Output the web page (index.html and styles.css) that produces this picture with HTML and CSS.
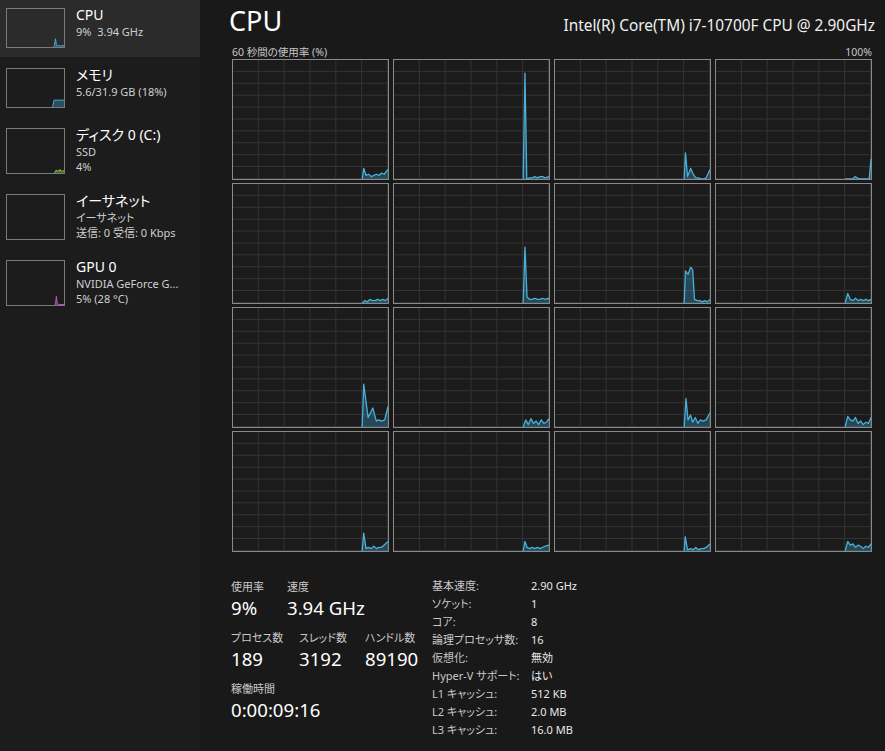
FILE: index.html
```html
<!DOCTYPE html>
<html lang="ja">
<head>
<meta charset="utf-8">
<title>タスク マネージャー - CPU</title>
<link rel="stylesheet" href="styles.css">
</head>
<body>
<div class="app">
  <aside class="sidebar">
    <div class="item selected">
      <div class="thumb"><svg viewBox="0 0 60 100" preserveAspectRatio="none"><polygon class="f-cpu" points="49,100 50,96 51,78 52,95 53,97 54,96 55,97 56,98 57,97 58,96 60,97 60,100"/><polyline class="l-cpu" points="49,100 50,96 51,78 52,95 53,97 54,96 55,97 56,98 57,97 58,96 60,97"/></svg></div>
      <div class="info"><div class="name">CPU</div><div class="sub">9%&nbsp;&nbsp;3.94 GHz</div></div>
    </div>
    <div class="item">
      <div class="thumb"><svg viewBox="0 0 60 100" preserveAspectRatio="none"><polygon class="f-mem" points="48,100 49.5,82 60,82 60,100"/><polyline class="l-mem" points="48,100 49.5,82 60,82"/></svg></div>
      <div class="info"><div class="name">メモリ</div><div class="sub">5.6/31.9 GB (18%)</div></div>
    </div>
    <div class="item">
      <div class="thumb tall"><svg viewBox="0 0 60 100" preserveAspectRatio="none"><polygon class="f-disk" points="50,100 51,96 52,93 53,97 54,94 55,96 56,92 57,97 58,95 59,96 60,94 60,100"/><polyline class="l-disk" points="50,100 51,96 52,93 53,97 54,94 55,96 56,92 57,97 58,95 59,96 60,94"/></svg></div>
      <div class="info"><div class="name">ディスク 0 (C:)</div><div class="sub">SSD</div><div class="sub">4%</div></div>
    </div>
    <div class="item">
      <div class="thumb tall"></div>
      <div class="info"><div class="name">イーサネット</div><div class="sub">イーサネット</div><div class="sub">送信: 0 受信: 0 Kbps</div></div>
    </div>
    <div class="item">
      <div class="thumb tall"><svg viewBox="0 0 60 100" preserveAspectRatio="none"><polygon class="f-gpu" points="50,100 51,99 52,80 53,99 54,98 55,99 60,99 60,100"/><polyline class="l-gpu" points="50,100 51,99 52,80 53,99 54,98 55,99 60,99"/></svg></div>
      <div class="info"><div class="name">GPU 0</div><div class="sub">NVIDIA GeForce G...</div><div class="sub">5% (28 °C)</div></div>
    </div>
  </aside>

  <main class="main">
    <header class="head">
      <h1 class="title">CPU</h1>
      <div class="model">Intel(R) Core(TM) i7-10700F CPU @ 2.90GHz</div>
    </header>
    <div class="axis"><span>60 秒間の使用率 (%)</span><span>100%</span></div>

    <div class="graphs">
      <div class="cell"><svg viewBox="0 0 60 100" preserveAspectRatio="none"><polygon class="fill" points="50,100 50.6,91 51.5,97 52.5,96 53.5,98 54.5,97 55.5,96 56.5,97 57.5,95 58.5,96 60,92 60,100"/><polyline class="line" points="50,100 50.6,91 51.5,97 52.5,96 53.5,98 54.5,97 55.5,96 56.5,97 57.5,95 58.5,96 60,92"/></svg></div>
      <div class="cell"><svg viewBox="0 0 60 100" preserveAspectRatio="none"><polygon class="fill" points="50,100 50.7,11 51.4,100 52.5,99 53.5,99 54.5,98 55.5,99 56.5,98 57.5,98 58.5,99 60,98 60,100"/><polyline class="line" points="50,100 50.7,11 51.4,100 52.5,99 53.5,99 54.5,98 55.5,99 56.5,98 57.5,98 58.5,99 60,98"/></svg></div>
      <div class="cell"><svg viewBox="0 0 60 100" preserveAspectRatio="none"><polygon class="fill" points="50,100 50.5,78 51.3,98 52.5,91 53.5,96 54.5,99 55.5,99 56.5,100 57.5,100 58.5,99 60,92 60,100"/><polyline class="line" points="50,100 50.5,78 51.3,98 52.5,91 53.5,96 54.5,99 55.5,99 56.5,100 57.5,100 58.5,99 60,92"/></svg></div>
      <div class="cell"><svg viewBox="0 0 60 100" preserveAspectRatio="none"><polygon class="fill" points="50,100 53,100 53.8,98 54.6,99 55.5,100 59.3,100 60,83 60,100"/><polyline class="line" points="50,100 53,100 53.8,98 54.6,99 55.5,100 59.3,100 60,83"/></svg></div>

      <div class="cell"><svg viewBox="0 0 60 100" preserveAspectRatio="none"><polygon class="fill" points="50,100 51,98 52,99 53,97 54,98 55,98 56,97 57,98 58,97 59,98 60,96 60,100"/><polyline class="line" points="50,100 51,98 52,99 53,97 54,98 55,98 56,97 57,98 58,97 59,98 60,96"/></svg></div>
      <div class="cell"><svg viewBox="0 0 60 100" preserveAspectRatio="none"><polygon class="fill" points="50,100 50.7,53 51.5,95 52.5,97 53.5,97 54.5,96 55.5,97 56.5,97 57.5,96 58.5,97 60,96 60,100"/><polyline class="line" points="50,100 50.7,53 51.5,95 52.5,97 53.5,97 54.5,96 55.5,97 56.5,97 57.5,96 58.5,97 60,96"/></svg></div>
      <div class="cell"><svg viewBox="0 0 60 100" preserveAspectRatio="none"><polygon class="fill" points="50,100 50.5,73 51.5,76 52.5,70 53.3,72 54,97 55,98 56,98 57,99 58,98 59,99 60,97 60,100"/><polyline class="line" points="50,100 50.5,73 51.5,76 52.5,70 53.3,72 54,97 55,98 56,98 57,99 58,98 59,99 60,97"/></svg></div>
      <div class="cell"><svg viewBox="0 0 60 100" preserveAspectRatio="none"><polygon class="fill" points="50,100 51,92 52,97 53,98 54,96 55,98 56,97 57,98 58,97 59,98 60,97 60,100"/><polyline class="line" points="50,100 51,92 52,97 53,98 54,96 55,98 56,97 57,98 58,97 59,98 60,97"/></svg></div>

      <div class="cell"><svg viewBox="0 0 60 100" preserveAspectRatio="none"><polygon class="fill" points="50,100 50.6,64 52.3,92 54.1,84 55.5,95 56.5,94 57.5,95 58.7,94 60,83 60,100"/><polyline class="line" points="50,100 50.6,64 52.3,92 54.1,84 55.5,95 56.5,94 57.5,95 58.7,94 60,83"/></svg></div>
      <div class="cell"><svg viewBox="0 0 60 100" preserveAspectRatio="none"><polygon class="fill" points="50,100 51,94 52,98 53,93 54,97 55,95 56,98 57,94 58,97 59,96 60,93 60,100"/><polyline class="line" points="50,100 51,94 52,98 53,93 54,97 55,95 56,98 57,94 58,97 59,96 60,93"/></svg></div>
      <div class="cell"><svg viewBox="0 0 60 100" preserveAspectRatio="none"><polygon class="fill" points="50,100 50.7,76 51.5,94 52.5,90 53.3,96 54.3,92 55.3,97 56.3,94 57.3,95 58.5,94 60,88 60,100"/><polyline class="line" points="50,100 50.7,76 51.5,94 52.5,90 53.3,96 54.3,92 55.3,97 56.3,94 57.3,95 58.5,94 60,88"/></svg></div>
      <div class="cell"><svg viewBox="0 0 60 100" preserveAspectRatio="none"><polygon class="fill" points="50,100 51,91 52,94 53,95 54,92 55,97 56,95 57,98 58,96 59,97 60,92 60,100"/><polyline class="line" points="50,100 51,91 52,94 53,95 54,92 55,97 56,95 57,98 58,96 59,97 60,92"/></svg></div>

      <div class="cell"><svg viewBox="0 0 60 100" preserveAspectRatio="none"><polygon class="fill" points="50,100 50.6,85 51.5,98 52.5,97 53.5,98 54.5,96 55.5,98 56.5,97 57.5,97 58.5,95 60,92 60,100"/><polyline class="line" points="50,100 50.6,85 51.5,98 52.5,97 53.5,98 54.5,96 55.5,98 56.5,97 57.5,97 58.5,95 60,92"/></svg></div>
      <div class="cell"><svg viewBox="0 0 60 100" preserveAspectRatio="none"><polygon class="fill" points="50,100 50.7,92 51.5,97 52.5,98 53.5,97 54.5,98 55.5,97 56.5,98 57.5,97 58.5,96 60,95 60,100"/><polyline class="line" points="50,100 50.7,92 51.5,97 52.5,98 53.5,97 54.5,98 55.5,97 56.5,98 57.5,97 58.5,96 60,95"/></svg></div>
      <div class="cell"><svg viewBox="0 0 60 100" preserveAspectRatio="none"><polygon class="fill" points="50,100 50.4,88 51.3,99 52.5,98 53.5,99 54.5,97 55.5,99 56.5,98 57.5,98 58.5,97 60,94 60,100"/><polyline class="line" points="50,100 50.4,88 51.3,99 52.5,98 53.5,99 54.5,97 55.5,99 56.5,98 57.5,98 58.5,97 60,94"/></svg></div>
      <div class="cell"><svg viewBox="0 0 60 100" preserveAspectRatio="none"><polygon class="fill" points="50,100 51,92 52,95 53,94 54,97 55,95 56,96 57,98 58,96 59,97 60,94 60,100"/><polyline class="line" points="50,100 51,92 52,95 53,94 54,97 55,95 56,96 57,98 58,96 59,97 60,94"/></svg></div>
    </div>

    <section class="stats">
      <div class="stats-left">
        <div class="stat-row">
          <div class="stat w56"><div class="lbl">使用率</div><div class="val">9%</div></div>
          <div class="stat"><div class="lbl">速度</div><div class="val">3.94 GHz</div></div>
        </div>
        <div class="stat-row">
          <div class="stat w68"><div class="lbl">プロセス数</div><div class="val">189</div></div>
          <div class="stat w66"><div class="lbl">スレッド数</div><div class="val">3192</div></div>
          <div class="stat"><div class="lbl">ハンドル数</div><div class="val">89190</div></div>
        </div>
        <div class="stat-row">
          <div class="stat"><div class="lbl">稼働時間</div><div class="val">0:00:09:16</div></div>
        </div>
      </div>
      <dl class="specs">
        <dt>基本速度:</dt><dd>2.90 GHz</dd>
        <dt>ソケット:</dt><dd>1</dd>
        <dt>コア:</dt><dd>8</dd>
        <dt>論理プロセッサ数:</dt><dd>16</dd>
        <dt>仮想化:</dt><dd>無効</dd>
        <dt>Hyper-V サポート:</dt><dd>はい</dd>
        <dt>L1 キャッシュ:</dt><dd>512 KB</dd>
        <dt>L2 キャッシュ:</dt><dd>2.0 MB</dd>
        <dt>L3 キャッシュ:</dt><dd>16.0 MB</dd>
      </dl>
    </section>
  </main>
</div>
</body>
</html>
```

FILE: styles.css
```css
* { box-sizing: border-box; }

body {
  margin: 0;
  background: #191919;
  color: #ffffff;
  font-family: "Noto Sans", "Noto Sans CJK JP", sans-serif;
  font-feature-settings: "palt" 1;
}

.app {
  display: flex;
  width: 885px;
  height: 751px;
  overflow: hidden;
}

/* ---------- sidebar ---------- */
.sidebar {
  width: 200px;
  flex: none;
  background: #1c1c1c;
}

.item {
  display: flex;
  gap: 11px;
  padding: 8px 6px 9px;
  margin-bottom: 3px;
}

.item.selected { background: #2b2b2b; }

.thumb {
  width: 59px;
  height: 40px;
  flex: none;
  border: 1px solid #7b7b7b;
}

.thumb.tall { height: 46px; }

.thumb svg, .cell svg {
  display: block;
  width: 100%;
  height: 100%;
}

.info { margin-top: -2px; }

.name {
  font-size: 14px;
  line-height: 18px;
  color: #ffffff;
  white-space: nowrap;
}

.sub {
  font-size: 11px;
  line-height: 15px;
  color: #cfcfcf;
  white-space: nowrap;
}

.l-cpu, .l-mem { fill: none; stroke: #4aa9d4; stroke-width: 1; vector-effect: non-scaling-stroke; }
.f-cpu, .f-mem { fill: rgba(74, 169, 212, 0.35); }
.l-disk { fill: none; stroke: #8dc63f; stroke-width: 1; vector-effect: non-scaling-stroke; }
.f-disk { fill: rgba(141, 198, 63, 0.4); }
.l-gpu { fill: none; stroke: #c153c9; stroke-width: 1; vector-effect: non-scaling-stroke; }
.f-gpu { fill: rgba(193, 83, 201, 0.4); }

/* ---------- main ---------- */
.main {
  flex: 1;
  padding: 0 13px 0 32px;
}

.head {
  display: flex;
  justify-content: space-between;
  align-items: baseline;
  padding-top: 5px;
  height: 37px;
}

.title {
  margin: 0 0 0 -3px;
  font-size: 27px;
  line-height: 32px;
  font-weight: normal;
}

.model {
  font-size: 15.4px;
  line-height: 20px;
  color: #f0f0f0;
  margin-right: -3px;
}

.axis {
  display: flex;
  justify-content: space-between;
  margin-top: 8px;
  font-size: 10.5px;
  line-height: 14px;
  color: #c8c8c8;
}

.graphs {
  display: grid;
  grid-template-columns: repeat(4, 157px);
  grid-auto-rows: 121px;
  column-gap: 4px;
  row-gap: 3px;
}

.cell {
  border: 1px solid #8a8a8a;
  background-color: #1b1b1b;
  background-image:
    linear-gradient(90deg, transparent calc(100% - 1px), #333333 0),
    linear-gradient(180deg, transparent calc(100% - 1px), #333333 0);
  background-size: calc(100% / 6) calc(100% / 10);
}

.line {
  fill: none;
  stroke: #4ab0da;
  stroke-width: 1.3;
  vector-effect: non-scaling-stroke;
  stroke-linejoin: round;
}

.fill { fill: rgba(60, 160, 205, 0.33); }

/* ---------- stats ---------- */
.stats {
  display: flex;
  margin-top: 25px;
}

.stats-left {
  width: 201px;
  margin-left: -1px;
  padding-top: 3px;
}

.stat-row {
  display: flex;
  margin-bottom: 11px;
}

.w56 { width: 56px; }
.w68 { width: 68px; }
.w66 { width: 66px; }

.lbl {
  font-size: 11px;
  line-height: 14px;
  color: #c8c8c8;
  margin-bottom: 2px;
  white-space: nowrap;
}

.val {
  font-size: 18.6px;
  line-height: 24px;
  color: #ffffff;
  white-space: nowrap;
}

.specs {
  display: grid;
  grid-template-columns: 99px auto;
  margin: 0;
  font-size: 11px;
  line-height: 18px;
}

.specs dt { color: #c8c8c8; white-space: nowrap; }
.specs dd { margin: 0; color: #e8e8e8; white-space: nowrap; }
```
